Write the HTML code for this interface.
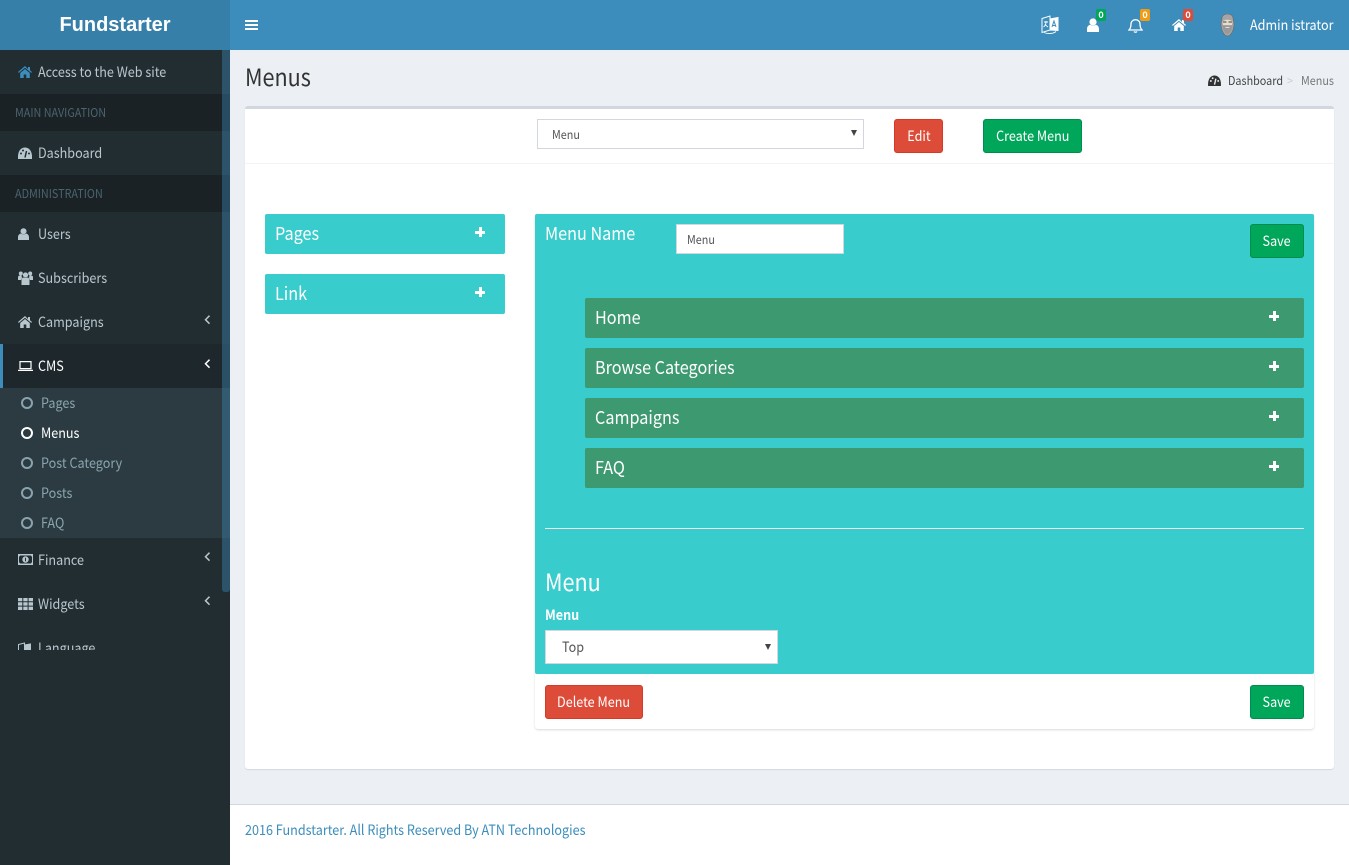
<!DOCTYPE html>
<html><head><meta charset="utf-8"><title>Menus</title>
<style>
*{box-sizing:border-box}
html,body{margin:0;padding:0;width:1349px;height:865px;overflow:hidden;background:#ecf0f5;font-family:"Noto Sans CJK SC","Liberation Sans",sans-serif;font-size:14px;color:#333}
.a{position:absolute}
.t{position:absolute;white-space:nowrap;line-height:20px;transform:scaleX(.9);transform-origin:0 50%}
svg{position:absolute;display:block}
.row{position:absolute;left:0;width:230px;height:44px}
.hd{position:absolute;left:0;width:230px;height:37px;background:#1a2226;color:#4b646f;font-size:12px;line-height:37px;padding-left:15px}
.n{position:absolute;left:38px;top:12px;line-height:20px;color:#b8c7ce;white-space:nowrap;font-size:14px;transform:scaleX(.9);transform-origin:0 50%}
.sub{position:absolute;left:41px;line-height:20px;color:#8aa4af;white-space:nowrap;font-size:14px;transform:scaleX(.9);transform-origin:0 50%}
.s{display:inline-block;transform:scaleX(.9);transform-origin:0 50%;white-space:nowrap}
.c{display:inline-block;transform:scaleX(.9);transform-origin:50% 50%;white-space:nowrap}
.ring{position:absolute;left:21px;width:12px;height:12px;border:2px solid #8aa4af;border-radius:50%}
.btn{position:absolute;height:34px;border-radius:3px;color:#fff;font-size:14px;line-height:32px;text-align:center;border:1px solid}
.red{background:#dd4b39;border-color:#d73925}
.green{background:#00a65a;border-color:#008d4c}
.teal{position:absolute;background:#39cccc;border-radius:2px}
.g{position:absolute;left:585px;width:719px;height:40px;background:#3d9970;border-radius:2px;color:#fff;font-size:18px;line-height:38px;padding-left:10px}
.plus{position:absolute;width:10px;height:10px}
.plus:before{content:"";position:absolute;left:0;top:3.5px;width:10px;height:3px;background:#fff}
.plus:after{content:"";position:absolute;left:3.5px;top:0;width:3px;height:10px;background:#fff}
.chev{position:absolute;left:204px;width:8px;height:10px}
.badge{position:absolute;width:10px;height:12px;border-radius:2px;color:#fff;font-size:9px;line-height:12px;text-align:center;font-weight:700}
</style></head>
<body>
<div class="a" style="left:0;top:0;width:230px;height:50px;background:#367fa9;color:#fff;font:700 20px/51px 'Liberation Sans',sans-serif;text-align:center">Fundstarter</div>
<div class="a" style="left:230px;top:0;width:1119px;height:50px;background:#3c8dbc"></div>
<div class="a" style="left:245px;top:20px;width:12.5px;height:2px;background:#fff"></div>
<div class="a" style="left:245px;top:24px;width:12.5px;height:2px;background:#fff"></div>
<div class="a" style="left:245px;top:28px;width:12.5px;height:2px;background:#fff"></div>

<!-- header right -->
<svg style="left:1041px;top:15px" width="18" height="20" viewBox="0 0 18 20" fill="none" stroke="#fff" stroke-width="1"><path d="M1 3.5 9 1v14l-8 2.5z" fill="#3c8dbc"/><path d="M9 4l8-1.5v13L9 15z" fill="#fff"/><path d="M3 7h4M5 6v1c0 2-1 4-2.5 5M4 9c1 1.500 2 2.500 3 3" stroke-width=".9"/><path d="M11 12l2-6 2 6M11.800 10.500h2.500" stroke="#3c8dbc" stroke-width="1"/><path d="M3 17.500c3 1.500 9 1.500 12-1" stroke-width=".9"/></svg>
<svg style="left:1087px;top:18px" width="12" height="14" viewBox="0 0 12 14" fill="#fff"><circle cx="6" cy="4" r="3.600"/><path d="M0 14v-3c0-3 2-4 3-4.300 1.800 1.200 4.200 1.200 6 0 1 .3 3 1.300 3 4.300v3z"/></svg>
<div class="badge" style="left:1096px;top:9px;background:#00a65a">0</div>
<svg style="left:1128px;top:18px" width="15" height="15" viewBox="0 0 15 15" fill="none" stroke="#fff" stroke-width="1.300"><path d="M1 12c1.500-1.500 2-3 2-6 0-2.500 2-4.300 4.500-4.300S12 3.500 12 6c0 3 .5 4.500 2 6z"/><path d="M6 13.500c.8 1 2.200 1 3 0" /></svg>
<div class="badge" style="left:1140px;top:9px;background:#f39c12">0</div>
<svg style="left:1172px;top:19px" width="14" height="12" viewBox="0 0 14 12" fill="#fff"><path d="M7 0 0 6l.8.900L7 1.700l6.200 5.200.8-.9-2-1.700V1h-2v2z"/><path d="M2.200 7 7 3l4.800 4v5H8.300V8.500H5.700V12H2.200z"/></svg>
<div class="badge" style="left:1183px;top:9px;background:#dd4b39">0</div>
<svg style="left:1219px;top:14px" width="17" height="23" viewBox="0 0 17 23"><path d="M3 4c0-2.500 2.500-4 5.500-4S14 1.500 14 4l1 6c0 6-3 12-6.500 12S2 16 2 10z" fill="#a5a5a5" stroke="#666" stroke-width=".6"/><path d="M3.500 8c1-3 9-3 10 0l-.5 3H4z" fill="#e8dccb"/><path d="M4 8h3.500M9.500 8H13" stroke="#444" stroke-width=".9"/><path d="M3.500 11c2 1.500 8 1.500 10 0-.2 4-2.500 9-5 9s-4.800-5-5-9z" fill="#999"/><path d="M6.500 13.500h4" stroke="#eee" stroke-width=".8"/></svg>
<div class="t" style="left:1250px;top:15px;color:#fff;font-size:14px">Admin istrator</div>

<!-- sidebar -->
<div class="a" style="left:0;top:50px;width:230px;height:815px;background:#222d32"></div>
<div class="a" style="left:0;top:50px;width:230px;height:600px;overflow:hidden">
  <div class="row" style="top:0">
    <svg style="left:18px;top:16px" width="14" height="12" viewBox="0 0 14 12" fill="#3c8dbc"><path d="M7 0 0 6l.8.900L7 1.700l6.200 5.200.8-.9-2-1.700V1h-2v2z"/><path d="M2.200 7 7 3l4.800 4v5H8.300V8.500H5.700V12H2.200z"/></svg>
    <div class="n">Access to the Web site</div>
  </div>
  <div class="hd" style="top:44px"><span class="s">MAIN NAVIGATION</span></div>
  <div class="row" style="top:81px">
    <svg style="left:18px;top:16px" width="14" height="12" viewBox="0 0 14 12"><path d="M0 12C-.6 4 3 .5 7 .5s7.600 3.500 7 11.500z" fill="#b8c7ce"/><path d="M7 10.500 8.500 4" stroke="#222d32" stroke-width="1.500"/><circle cx="3" cy="6.500" r="1" fill="#222d32"/><circle cx="5" cy="3.500" r="1" fill="#222d32"/><circle cx="11" cy="6.500" r="1" fill="#222d32"/></svg>
    <div class="n">Dashboard</div>
  </div>
  <div class="hd" style="top:125px"><span class="s">ADMINISTRATION</span></div>
  <div class="row" style="top:162px">
    <svg style="left:18px;top:16px" width="11" height="12" viewBox="0 0 12 13" fill="#b8c7ce"><circle cx="6" cy="3.500" r="3.300"/><path d="M0 13v-3c0-2.500 1.800-3.600 3-4 1.800 1.200 4.200 1.200 6 0 1.200.4 3 1.500 3 4v3z"/></svg>
    <div class="n">Users</div>
  </div>
  <div class="row" style="top:206px">
    <svg style="left:18px;top:15px" width="15" height="14" viewBox="0 0 15 14" fill="#b8c7ce"><circle cx="2.800" cy="2.500" r="2"/><circle cx="12.200" cy="2.500" r="2"/><circle cx="7.500" cy="4" r="2.600"/><path d="M0 8V6c0-1 1-1.500 2-1.500h1.500L4 7 3 9H0zM15 8V6c0-1-1-1.500-2-1.500h-1.500L11 7l1 2h3zM3.500 14V9c0-1.500 1-2.500 2-2.500 1.200.6 2.800.6 4 0 1 0 2 1 2 2.500v5z"/></svg>
    <div class="n">Subscribers</div>
  </div>
  <div class="row" style="top:250px">
    <svg style="left:18px;top:16px" width="14" height="12" viewBox="0 0 14 12" fill="#b8c7ce"><path d="M7 0 0 6l.8.900L7 1.700l6.200 5.200.8-.9-2-1.700V1h-2v2z"/><path d="M2.200 7 7 3l4.800 4v5H8.300V8.500H5.700V12H2.200z"/></svg>
    <div class="n">Campaigns</div>
    <svg class="chev" style="top:15px" viewBox="0 0 8 10" fill="none" stroke="#b8c7ce" stroke-width="1.500"><path d="M5.500 .7 1.500 4.700l4 4"/></svg>
  </div>
  <div class="row" style="top:294px;background:#1e282c;border-left:3px solid #3c8dbc">
    <svg style="left:15px;top:17px" width="15" height="10" viewBox="0 0 15 10" fill="none" stroke="#fff" stroke-width="1.200"><path d="M2 .6h11v7H2z"/><path d="M0 9.400h15" stroke-width="1.300"/></svg>
    <div class="n" style="left:35px;color:#fff">CMS</div>
    <svg class="chev" style="top:15px;left:201px" viewBox="0 0 8 10" fill="none" stroke="#fff" stroke-width="1.500"><path d="M5.500 .7 1.500 4.700l4 4"/></svg>
  </div>
  <div class="a" style="left:0;top:338px;width:230px;height:150px;background:#2c3b41"></div>
  <div class="ring" style="top:347px"></div><div class="sub" style="top:343px">Pages</div>
  <div class="ring" style="top:377px;border-color:#fff"></div><div class="sub" style="top:373px;color:#fff">Menus</div>
  <div class="ring" style="top:407px"></div><div class="sub" style="top:403px">Post Category</div>
  <div class="ring" style="top:437px"></div><div class="sub" style="top:433px">Posts</div>
  <div class="ring" style="top:467px"></div><div class="sub" style="top:463px">FAQ</div>
  <div class="row" style="top:488px">
    <svg style="left:18px;top:16px" width="15" height="11" viewBox="0 0 15 11"><path d="M0 0h15v11H0z" fill="#b8c7ce"/><path d="M2 1.500h11l1 1.500v5l-1 1.500H2L1 8V3z" fill="#222d32"/><circle cx="7.500" cy="5.500" r="3.200" fill="#b8c7ce"/><path d="M7.500 3.800v3.400" stroke="#222d32"/></svg>
    <div class="n">Finance</div>
    <svg class="chev" style="top:14px" viewBox="0 0 8 10" fill="none" stroke="#b8c7ce" stroke-width="1.500"><path d="M5.500 .7 1.500 4.700l4 4"/></svg>
  </div>
  <div class="row" style="top:532px">
    <svg style="left:18px;top:16px" width="15" height="12" viewBox="0 0 15 12" fill="#b8c7ce"><path d="M0 0h4.300v3.300H0zM5.300 0h4.300v3.300H5.300zM10.600 0H15v3.300h-4.400zM0 4.300h4.300v3.300H0zM5.300 4.300h4.300v3.300H5.300zM10.600 4.300H15v3.300h-4.400zM0 8.600h4.300V12H0zM5.300 8.600h4.300V12H5.300zM10.600 8.600H15V12h-4.400z"/></svg>
    <div class="n">Widgets</div>
    <svg class="chev" style="top:14px" viewBox="0 0 8 10" fill="none" stroke="#b8c7ce" stroke-width="1.500"><path d="M5.500 .7 1.500 4.700l4 4"/></svg>
  </div>
  <div class="row" style="top:576px">
    <svg style="left:18px;top:16px" width="13" height="14" viewBox="0 0 13 14" fill="none" stroke="#b8c7ce" stroke-width="1"><path d="M.5 2.500l6-1.500v12l-6 1z"/><path d="M6.500 3l6-1v10l-6 1z" fill="#b8c7ce"/></svg>
    <div class="n">Language</div>
  </div>
</div>
<div class="a" style="left:222px;top:50px;width:8px;height:542px;background:#3c8dbc;opacity:.4;border-radius:0 0 3px 3px"></div>

<!-- page title -->
<div class="t" style="left:245px;top:61px;font-size:24px;line-height:30px;color:#333">Menus</div>
<svg style="left:1208px;top:75px" width="13" height="11" viewBox="0 0 14 12"><path d="M0 12C-.6 4 3 .5 7 .5s7.600 3.500 7 11.500z" fill="#333"/><path d="M7 10.500 8.500 4" stroke="#ecf0f5" stroke-width="1.500"/><circle cx="3" cy="6.500" r="1" fill="#ecf0f5"/><circle cx="5" cy="3.500" r="1" fill="#ecf0f5"/><circle cx="11" cy="6.500" r="1" fill="#ecf0f5"/></svg>
<div class="t" style="left:1228px;top:71px;font-size:12px;color:#444">Dashboard</div>
<div class="t" style="left:1287px;top:71px;font-size:12px;color:#ccc">&gt;</div>
<div class="t" style="left:1301px;top:71px;font-size:12px;color:#777">Menus</div>

<!-- box -->
<div class="a" style="left:245px;top:106px;width:1089px;height:663px;background:#fff;border-top:3px solid #d2d6de;border-radius:3px;box-shadow:0 1px 1px rgba(0,0,0,.1)"></div>
<div class="a" style="left:245px;top:163px;width:1089px;height:1px;background:#f4f4f4"></div>

<div class="a" style="left:537px;top:119px;width:327px;height:30px;background:#fff;border:1px solid #d2d6de"></div>
<div class="t" style="left:552px;top:125px;font-size:12px;color:#555">Menu</div>
<div class="a" style="left:851px;top:130px;border-left:3.500px solid transparent;border-right:3.500px solid transparent;border-top:6px solid #444"></div>
<div class="btn red" style="left:894px;top:119px;width:49px"><span class="c">Edit</span></div>
<div class="btn green" style="left:983px;top:119px;width:99px"><span class="c">Create Menu</span></div>

<div class="teal" style="left:265px;top:214px;width:240px;height:40px;color:#fff;font-size:18px;line-height:38px;padding-left:10px"><span class="s">Pages</span><div class="plus" style="left:210px;top:13px"></div></div>
<div class="teal" style="left:265px;top:274px;width:240px;height:40px;color:#fff;font-size:18px;line-height:38px;padding-left:10px"><span class="s">Link</span><div class="plus" style="left:210px;top:13px"></div></div>

<!-- right panel -->
<div class="a" style="left:535px;top:214px;width:779px;height:515px;background:#fff;border-radius:3px;box-shadow:0 1px 2px rgba(0,0,0,.15)"></div>
<div class="teal" style="left:535px;top:214px;width:779px;height:460px"></div>
<div class="t" style="left:545px;top:223px;font-size:18px;color:#fff">Menu Name</div>
<div class="a" style="left:676px;top:224px;width:168px;height:30px;background:#fff;border:1px solid #d2d6de"></div>
<div class="t" style="left:687px;top:230px;font-size:12px;color:#555">Menu</div>
<div class="btn green" style="left:1250px;top:224px;width:54px"><span class="c">Save</span></div>

<div class="g" style="top:298px"><span class="s">Home</span><div class="plus" style="left:684px;top:13px"></div></div>
<div class="g" style="top:348px"><span class="s">Browse Categories</span><div class="plus" style="left:684px;top:13px"></div></div>
<div class="g" style="top:398px"><span class="s">Campaigns</span><div class="plus" style="left:684px;top:13px"></div></div>
<div class="g" style="top:448px"><span class="s">FAQ</span><div class="plus" style="left:684px;top:13px"></div></div>

<div class="a" style="left:545px;top:528px;width:759px;height:1px;background:#eee"></div>
<div class="t" style="left:545px;top:566px;font-size:24px;line-height:30px;color:#fff">Menu</div>
<div class="t" style="left:545px;top:605px;font-size:14px;font-weight:700;color:#fff">Menu</div>
<div class="a" style="left:545px;top:630px;width:233px;height:34px;background:#fff;border:1px solid #d2d6de"></div>
<div class="t" style="left:562px;top:637px;font-size:14px;color:#555">Top</div>
<div class="a" style="left:765px;top:644px;border-left:3.500px solid transparent;border-right:3.500px solid transparent;border-top:6px solid #444"></div>

<div class="btn red" style="left:545px;top:685px;width:98px"><span class="c">Delete Menu</span></div>
<div class="btn green" style="left:1250px;top:685px;width:54px"><span class="c">Save</span></div>

<!-- footer -->
<div class="a" style="left:230px;top:804px;width:1119px;height:61px;background:#fff;border-top:1px solid #d2d6de"></div>
<div class="t" style="left:245px;top:820px;font-size:14px;color:#3c8dbc">2016 Fundstarter. All Rights Reserved By ATN Technologies</div>
</body></html>
